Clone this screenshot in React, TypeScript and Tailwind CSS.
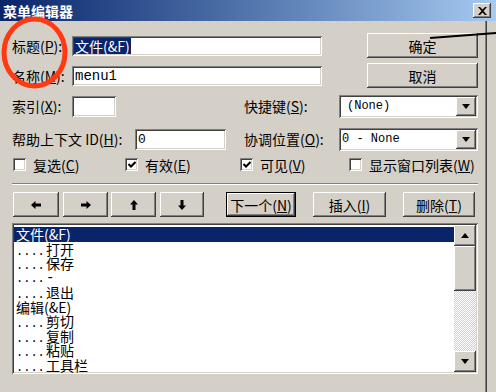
import React from 'react';

const raised =
  'bg-[#d4d0c8] shadow-[inset_-1px_-1px_#404040,inset_1px_1px_#ffffff,inset_-2px_-2px_#808080,inset_2px_2px_#d4d0c8]';
const sunken =
  'shadow-[inset_1px_1px_#808080,inset_-1px_-1px_#ffffff,inset_2px_2px_#404040,inset_-2px_-2px_#d4d0c8]';

function Arrow({ rotate }: { rotate: string }) {
  return (
    <svg width="10" height="8" viewBox="0 0 10 8" className={rotate}>
      <path d="M0 4 L4.5 0 V2.5 H10 V5.5 H4.5 V8 Z" fill="#000" />
    </svg>
  );
}

function Tri({ up }: { up?: boolean }) {
  return (
    <svg width="8" height="5" viewBox="0 0 8 5">
      <path d={up ? 'M4 0 L8 5 H0 Z' : 'M0 0 H8 L4 5 Z'} fill="#000" />
    </svg>
  );
}

function Combo({ text, pad }: { text: string; pad: string }) {
  return (
    <div className={`${sunken} flex h-[23px] w-[139px] shrink-0 items-center justify-between bg-white pr-[2px] ${pad}`}>
      <span className="font-['Liberation_Mono',monospace] text-[12px] leading-none">{text}</span>
      <div className={`${raised} flex h-[19px] w-[20px] items-center justify-center`}>
        <Tri />
      </div>
    </div>
  );
}

function Check({ checked, children, w }: { checked?: boolean; children: React.ReactNode; w: string }) {
  return (
    <div className={`flex shrink-0 items-center whitespace-nowrap ${w}`}>
      <div className={`${sunken} flex h-[13px] w-[13px] shrink-0 items-center justify-center bg-white`}>
        {checked && (
          <svg width="8" height="7" viewBox="0 0 8 7">
            <path d="M0.5 3 L3 5.5 L7.5 1" stroke="#000" strokeWidth="2" fill="none" />
          </svg>
        )}
      </div>
      <span className="ml-[7px] leading-none">{children}</span>
    </div>
  );
}

const items: [string, number][] = [
  ['文件(&F)', 0],
  ['打开', 1],
  ['保存', 1],
  ['-', 1],
  ['退出', 1],
  ['编辑(&E)', 0],
  ['剪切', 1],
  ['复制', 1],
  ['粘贴', 1],
  ['工具栏', 1],
];

export default function App() {
  return (
    <div className="relative h-[392px] w-[496px] overflow-hidden bg-[#d4d0c8] font-['Noto_Sans_CJK_SC',sans-serif] text-[14px] text-black select-none">
      {/* Title bar */}
      <div className="flex h-[21px] items-center justify-between bg-linear-to-r from-[#0a246a] to-[#a6caf0] pl-[3px] pr-[5px]">
        <span className="text-[14px] font-bold leading-none text-white">菜单编辑器</span>
        <div className={`${raised} flex h-[15px] w-[18px] items-center justify-center`}>
          <svg width="9" height="8" viewBox="0 0 9 8">
            <path d="M0 0h2l2.5 2.5L7 0h2L5.5 4 9 8H7L4.5 5.5 2 8H0l3.5-4z" fill="#000" />
          </svg>
        </div>
      </div>

      <div className="flex h-[371px]">
        <div className="w-[485px] pl-[12px]">
          {/* Caption */}
          <div className="mt-[12px] flex h-[25px] items-center">
            <span className="w-[60px] leading-none">标题(<u>P</u>):</span>
            <div className={`${sunken} flex h-[20px] w-[250px] items-center bg-white px-[2px]`}>
              <span className="bg-[#0a246a] px-[1px] leading-[16px] text-white">{'文件(&F)'}</span>
            </div>
            <button className={`${raised} ml-[45px] h-[25px] w-[111px] leading-none`}>确定</button>
          </div>

          {/* Name */}
          <div className="mt-[5px] flex h-[25px] items-center">
            <span className="w-[60px] leading-none">名称(<u>M</u>):</span>
            <div className={`${sunken} flex h-[20px] w-[250px] items-center bg-white px-[3px]`}>
              <span className="font-['Liberation_Mono',monospace] text-[14px] leading-none">menu1</span>
            </div>
            <button className={`${raised} ml-[45px] h-[25px] w-[111px] leading-none`}>取消</button>
          </div>

          {/* Index / shortcut */}
          <div className="mt-[6px] flex h-[24px] items-center">
            <div className="flex w-[232px] shrink-0 items-center">
              <span className="w-[60px] leading-none">索引(<u>X</u>):</span>
              <div className={`${sunken} h-[21px] w-[44px] bg-white`} />
            </div>
            <span className="w-[95px] shrink-0 leading-none">快捷键(<u>S</u>):</span>
            <Combo text="(None)" pad="pl-[8px]" />
          </div>

          {/* Help context / negotiate position */}
          <div className="mt-[9px] flex h-[24px] items-center">
            <div className="flex w-[232px] shrink-0 items-center">
              <span className="w-[123px] whitespace-nowrap leading-none">帮助上下文 ID(<u>H</u>):</span>
              <div className={`${sunken} flex h-[21px] w-[91px] items-center bg-white px-[3px]`}>
                <span className="font-['Liberation_Mono',monospace] text-[13px] leading-none">0</span>
              </div>
            </div>
            <span className="w-[95px] shrink-0 leading-none">协调位置(<u>O</u>):</span>
            <Combo text="0 - None" pad="pl-[3px]" />
          </div>

          {/* Checkboxes */}
          <div className="mt-[6px] flex h-[15px] items-center pl-[1px]">
            <Check w="w-[112px]">复选(<u>C</u>)</Check>
            <Check w="w-[115px]" checked>有效(<u>E</u>)</Check>
            <Check w="w-[109px]" checked>可见(<u>V</u>)</Check>
            <Check w="w-[125px]">显示窗口列表(<u>W</u>)</Check>
          </div>

          <div className="mt-[11px] h-[2px] w-[466px] border-t border-b border-t-[#808080] border-b-white" />

          {/* Buttons */}
          <div className="mt-[7px] flex h-[25px] items-center">
            <button className={`${raised} ml-[1px] flex h-[25px] w-[46px] items-center justify-center`}>
              <Arrow rotate="" />
            </button>
            <button className={`${raised} ml-[4px] flex h-[25px] w-[45px] items-center justify-center`}>
              <Arrow rotate="rotate-180" />
            </button>
            <button className={`${raised} ml-[3px] flex h-[25px] w-[45px] items-center justify-center`}>
              <Arrow rotate="rotate-90" />
            </button>
            <button className={`${raised} ml-[4px] flex h-[25px] w-[44px] items-center justify-center`}>
              <Arrow rotate="-rotate-90" />
            </button>
            <div className="ml-[22px] h-[25px] w-[70px] border border-black">
              <button className={`${raised} h-full w-full leading-none`}>下一个(<u>N</u>)</button>
            </div>
            <button className={`${raised} ml-[17px] h-[25px] w-[73px] leading-none`}>插入(<u>I</u>)</button>
            <button className={`${raised} ml-[17px] h-[25px] w-[72px] leading-none`}>删除(<u>T</u>)</button>
          </div>

          {/* Menu list */}
          <div className={`${sunken} mt-[6px] flex h-[151px] w-[466px] bg-white p-[2px]`}>
            <div className="flex-1 pt-[2px]">
              {items.map(([label, indent], i) => (
                <div
                  key={i}
                  className={`flex h-[14.5px] items-baseline pl-[2px] leading-[14.5px] ${
                    i === 0 ? 'bg-[#0a246a] text-white' : ''
                  }`}
                >
                  {indent === 1 && (
                    <span className="w-[30px] font-['Liberation_Mono',monospace] text-[12px]">....</span>
                  )}
                  {label === '-' ? (
                    <span className="font-['Liberation_Mono',monospace] text-[14px]">-</span>
                  ) : (
                    <span>{label}</span>
                  )}
                </div>
              ))}
            </div>
            <div className="flex w-[22px] flex-col">
              <div className={`${raised} flex h-[21px] items-center justify-center`}>
                <Tri up />
              </div>
              <div className={`${raised} h-[45px]`} />
              <div className="flex-1 bg-[image:repeating-conic-gradient(#ffffff_0_25%,#d4d0c8_0_50%)] bg-size-[2px_2px]" />
              <div className={`${raised} flex h-[21px] items-center justify-center`}>
                <Tri />
              </div>
            </div>
          </div>
        </div>
        <div className="w-px bg-[#808080]" />
        <div className="w-px bg-[#404040]" />
      </div>

      {/* Annotations */}
      <svg className="pointer-events-none absolute left-0 top-0" width="496" height="392">
        <ellipse cx="34.5" cy="52.5" rx="30.5" ry="33.5" fill="none" stroke="#ff3a12" strokeWidth="5" />
        <line x1="430" y1="38" x2="496" y2="33" stroke="#000" strokeWidth="2" />
      </svg>
    </div>
  );
}
